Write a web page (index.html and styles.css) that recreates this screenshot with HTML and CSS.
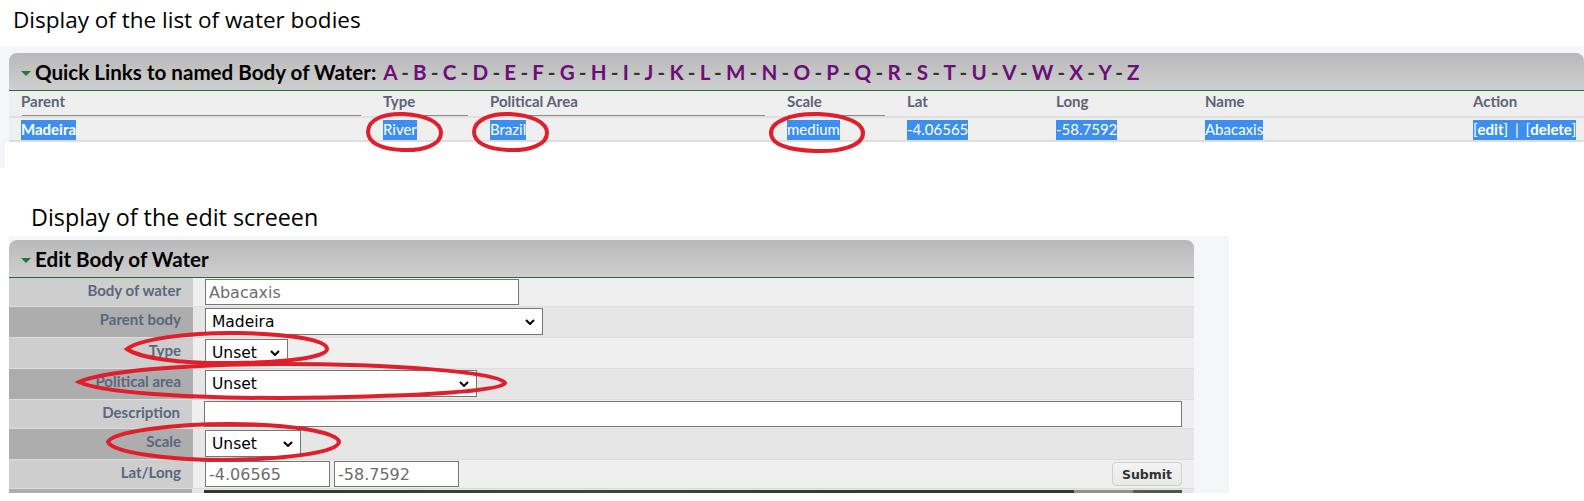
FILE: index.html
```html
<!DOCTYPE html>
<html>
    <head>
        <meta charset="utf-8">
        <title>Body of Water</title>
        <link rel="stylesheet" href="styles.css">
    </head>
    <body>
        <p class="caption caption-list">Display of the list of water bodies</p>

        <div class="list-panel">
            <h2 class="bar">
                <span class="arrow"></span>Quick Links to named Body of Water:
                <span class="letters"><a>A</a> - <a>B</a> - <a>C</a> - <a>D</a> - <a>E</a> - <a>F</a> - <a>G</a> - <a>H</a> - <a>I</a> - <a>J</a> - <a>K</a> - <a>L</a> - <a>M</a> - <a>N</a> - <a>O</a> - <a>P</a> - <a>Q</a> - <a>R</a> - <a>S</a> - <a>T</a> - <a>U</a> - <a>V</a> - <a>W</a> - <a>X</a> - <a>Y</a> - <a>Z</a></span>
            </h2>
            <div class="cols cols-head">
                <div class="sort">Parent</div>
                <div class="sort">Type</div>
                <div class="sort">Political Area</div>
                <div class="sort">Scale</div>
                <div>Lat</div>
                <div>Long</div>
                <div>Name</div>
                <div>Action</div>
            </div>
            <div class="cols cols-row">
                <div><span class="sel strong">Madeira</span></div>
                <div><span class="sel">River</span></div>
                <div><span class="sel">Brazil</span></div>
                <div><span class="sel">medium</span></div>
                <div><span class="sel">-4.06565</span></div>
                <div><span class="sel">-58.7592</span></div>
                <div><span class="sel">Abacaxis</span></div>
                <div><span class="sel actions">[<b>edit</b>] | [<b>delete</b>]</span></div>
            </div>
            <div class="list-blank"></div>
        </div>

        <p class="caption caption-edit">Display of the edit screeen</p>

        <div class="edit-panel">
            <div class="edit-inner">
                <h2 class="bar bar-edit"><span class="arrow"></span>Edit Body of Water</h2>
                <div class="form-row short">
                    <label>Body of water</label>
                    <div class="field"><input class="in in-name" type="text" value="Abacaxis"></div>
                </div>
                <div class="form-row even">
                    <label>Parent body</label>
                    <div class="field"><select class="dd dd-parent"><option>Madeira</option></select></div>
                </div>
                <div class="form-row">
                    <label>Type</label>
                    <div class="field"><select class="dd dd-type"><option>Unset</option></select></div>
                </div>
                <div class="form-row even">
                    <label>Political area</label>
                    <div class="field"><select class="dd dd-area"><option>Unset</option></select></div>
                </div>
                <div class="form-row short">
                    <label>Description</label>
                    <div class="field"><input class="in in-desc" type="text"></div>
                </div>
                <div class="form-row even">
                    <label>Scale</label>
                    <div class="field"><select class="dd dd-scale"><option>Unset</option></select></div>
                </div>
                <div class="form-row short">
                    <label>Lat/Long</label>
                    <div class="field">
                        <input class="in in-coord" type="text" value="-4.06565">
                        <input class="in in-coord" type="text" value="-58.7592">
                        <button class="submit" type="button">Submit</button>
                    </div>
                </div>
                <div class="form-row even row-map">
                    <label></label>
                    <div class="field"><div class="map"></div></div>
                </div>
            </div>
        </div>

        <!-- hand drawn red marks on top of the screenshot -->
        <svg class="marks" width="1584" height="501" viewBox="0 0 1584 501">
            <path d="M368 132C368 119 385 113 404 114C425 115 441 122 441 133C441 145 423 151 402 150C382 149 368 143 368 132Z"/>
            <path d="M474 132C474 120 491 113 510 114C531 115 547 122 547 133C547 145 529 151 508 150C488 149 474 143 474 132Z"/>
            <path d="M771 134C770 122 791 113 819 114C845 115 864 123 863 134C862 146 840 152 815 151C790 150 772 145 771 134Z"/>
            <path d="M127 349C140 339 190 332 240 333C290 334 327 340 327 349C327 357 290 362 235 363C180 364 140 358 127 349Z"/>
            <path d="M79 382C100 372 180 364 280 364C390 364 500 372 505 383C500 392 400 397 280 398C180 398 100 392 79 382Z"/>
            <path d="M108 442C112 432 170 424 230 424C290 424 338 432 339 442C338 452 290 459 225 460C165 460 112 452 108 442Z"/>
        </svg>
    </body>
</html>
```

FILE: styles.css
```css
* {
    margin: 0;
    padding: 0;
    box-sizing: border-box;
}
body {
    background: #fff;
    font-family: "Lato", "Open Sans", sans-serif;
    color: #000;
    height: 501px;
    overflow: hidden;
}
.caption {
    font-family: "Open Sans", sans-serif;
    line-height: 28px;
}
.caption-list {
    height: 46px;
    padding: 6px 0 0 13px;
    font-size: 22.5px;
}
.caption-edit {
    height: 68px;
    padding: 35px 0 0 31px;
    font-size: 23.3px;
}

/* grey title bars */
.bar {
    height: 38px;
    padding-left: 12px;
    font-size: 20.6px;
    line-height: 38px;
    font-weight: 700;
    background: linear-gradient(#b9b9b9, #cfcfcf);
    border-bottom: 1px solid #2b6b2f;
    border-radius: 8px 8px 0 0;
    display: flex;
    gap: 4px;
    white-space: nowrap;
}
.arrow {
    width: 0;
    height: 0;
    margin: 18px 0 0 0;
    border: 5px solid transparent;
    border-top-color: #1f7a35;
    border-bottom-width: 0;
}
.letters {
    margin-left: 3px;
    color: #333;
    word-spacing: -0.78px;
}
.letters a {
    color: #6b0f78;
}

/* list of water bodies */
.list-panel {
    height: 122px;
    padding: 7px 0 0 9px;
    background: #f5f6fa;
}
.cols {
    display: grid;
    grid-template-columns: 362px 107px 297px 120px 149px 149px 268px 1fr;
    padding-left: 12px;
    font-size: 15px;
    background: #efefef;
}
.cols-head {
    height: 27px;
    font-weight: 700;
    color: #5b6377;
    line-height: 20px;
    border-bottom: 2px solid #e0e0e0;
}
.cols-head .sort {
    height: 25px;
    position: relative;
}
.cols-head .sort::after {
    content: "";
    position: absolute;
    left: 1px;
    right: 22px;
    bottom: 0;
    border-bottom: 1px solid #8a8a8a;
}
.cols-row {
    height: 24px;
    padding-top: 2px;
    color: #fff;
    border-bottom: 2px solid #dedede;
}
.sel {
    display: inline-block;
    background: #3c8ff0;
    height: 20px;
    line-height: 19px;
}
.strong,
.sel b {
    font-weight: 700;
}
.actions {
    word-spacing: 3px;
}
.list-blank {
    height: 29px;
    margin-left: -4px;
    background: #fff;
}

/* edit form */
.edit-panel {
    width: 1220px;
    height: 257px;
    margin-left: 9px;
    padding-top: 4px;
    background: #f5f6fa;
}
.edit-inner {
    width: 1185px;
}
.form-row {
    display: flex;
    height: 31px;
    background: #efefef;
    border-bottom: 1px solid #dcdcdc;
}
.form-row.short {
    height: 29px;
}
.form-row.even {
    background: #e6e6e6;
}
.form-row label {
    width: 184px;
    padding: 2px 12px 0 0;
    text-align: right;
    font-size: 15px;
    font-weight: 700;
    line-height: 20px;
    color: #5b6680;
    background: #cecece;
}
.form-row.even label {
    background: #adadad;
}
.field {
    flex: 1;
    padding: 1px 12px 0;
    display: flex;
    gap: 4px;
    align-items: flex-start;
}
.in,
.dd {
    font-family: "DejaVu Sans", sans-serif;
    font-size: 15.5px;
    height: 26px;
    border: 1px solid #767676;
    background: #fff;
}
.in {
    padding: 0 3px;
    color: #6d6d6d;
    font-size: 16px;
}
.dd {
    appearance: none;
    color: #000;
    height: 27px;
    padding-left: 6px;
    background: #fff url("data:image/svg+xml,%3Csvg xmlns='http://www.w3.org/2000/svg' width='10' height='6'%3E%3Cpath d='M1 1l4 4 4-4' fill='none' stroke='%23000' stroke-width='2'/%3E%3C/svg%3E") no-repeat right 7px center;
}
.in-name { width: 314px; }
.in-desc { width: 978px; }
.in-coord { width: 125px; }
.dd-parent { width: 338px; }
.dd-type { width: 83px; }
.dd-area { width: 272px; }
.dd-scale { width: 96px; }
.submit {
    margin: 1px 0 0 auto;
    width: 70px;
    height: 24px;
    font-family: "DejaVu Sans", sans-serif;
    font-size: 12.5px;
    font-weight: 700;
    color: #333;
    background: linear-gradient(#f4f4f4, #e8e8e8);
    border: 1px solid #cfcfcf;
    border-radius: 4px;
}
.row-map {
    height: 4px;
    border: 0;
    overflow: hidden;
}
.map {
    width: 978px;
    height: 3px;
    background: linear-gradient(90deg, #2d3a2a 0, #3a4a36 40%, #2f3d2b 70%, #2f3d2b 89%, #8f948b 89%, #8f948b 95%, #55604f 95%, #4a5546 100%);
}

/* red marks */
.marks {
    position: absolute;
    left: 0;
    top: 0;
    pointer-events: none;
}
.marks path {
    fill: none;
    stroke: #e01f2d;
    stroke-width: 4;
}
```
